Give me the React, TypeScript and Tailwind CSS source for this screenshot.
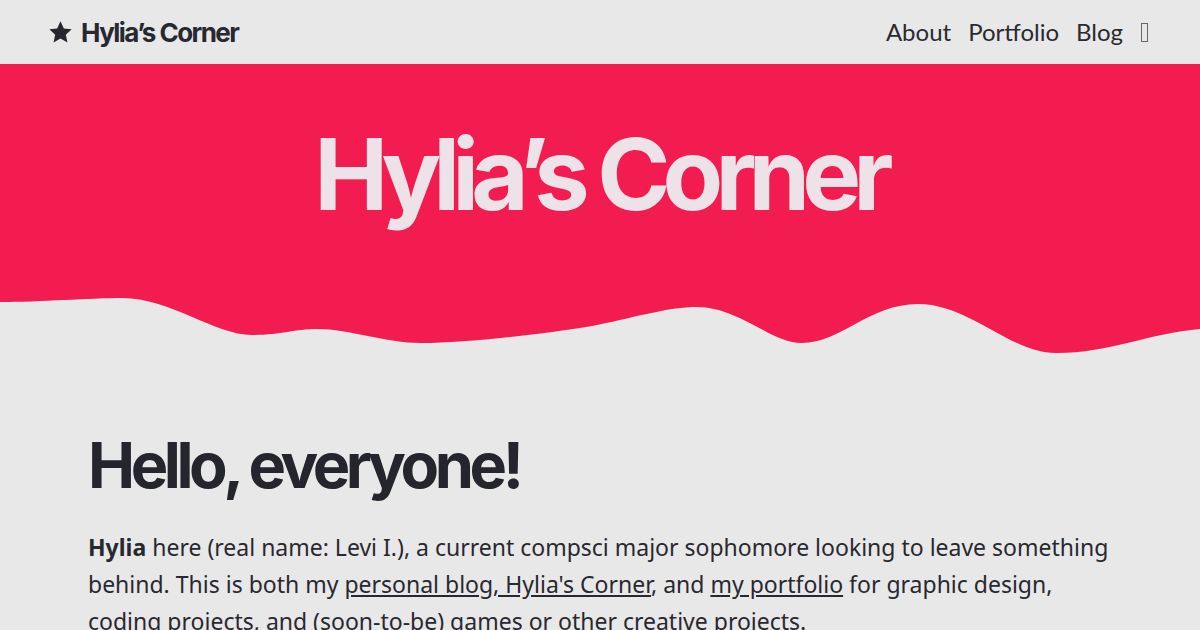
import React from 'react';

const Star: React.FC = () => (
  <svg viewBox="0 0 24 24" className="w-[25px] h-[25px]" fill="#26262e">
    <path d="M12 1.2l3.2 6.9 7.5.85-5.6 5.1 1.6 7.45L12 17.75l-6.7 3.75 1.6-7.45-5.6-5.1 7.5-.85z" />
  </svg>
);

const App: React.FC = () => {
  return (
    <div className="min-h-screen bg-[#e8e8e8] text-[#282830]">
      <nav className="h-16 flex items-center justify-between pl-[48px] pr-[52px]">
        <a className="flex items-center gap-[8px]">
          <Star />
          <span className="text-[26px] font-bold tracking-[-0.06em] font-['Inter',sans-serif]">Hylia’s Corner</span>
        </a>
        <div className="flex items-center gap-[17px] text-[24px] font-['Lato',sans-serif] text-[#2a2a30]">
          <a>About</a>
          <a>Portfolio</a>
          <a>Blog</a>
          <span className="ml-[1px] w-[7px] h-[19px] border-[1.5px] border-[#66666c]" />
        </div>
      </nav>

      <header>
        <div className="h-[232px] bg-[#f21c51] flex items-start justify-center pt-[61px]">
          <h1 className="text-[99px] leading-none font-bold tracking-[-0.08em] text-[#ece2e7] font-['Inter',sans-serif]">
            Hylia’s Corner
          </h1>
        </div>
        <svg viewBox="0 0 1200 60" preserveAspectRatio="none" className="block w-full h-[60px]">
          <path
            fill="#f21c51"
            d="M0 0 V6 C40 6 90 2 122 2 C170 2 215 39 252 39 C280 39 295 33 317 33 C350 33 385 47 421 47 C470 47 560 36 597 29 C640 20 670 11 696 11 C740 11 770 47 802 47 C840 47 870 8 918 8 C970 8 1010 57 1056 57 C1110 57 1150 37 1200 33 V0 Z"
          />
        </svg>
      </header>

      <main className="max-w-5xl mx-auto pt-[78px]">
        <h2 className="text-[63px] leading-none font-bold tracking-[-0.07em] text-[#25252d] font-['Inter',sans-serif]">
          Hello, everyone!
        </h2>
        <p className="mt-8 text-[23px] leading-[37px] font-['Noto_Sans',sans-serif]">
          <strong className="font-bold">Hylia</strong> here (real name: Levi I.), a current compsci major sophomore looking to leave something
          behind. This is both my <a className="underline">personal blog, Hylia's Corner</a>, and{' '}
          <a className="underline">my portfolio</a> for graphic design, coding projects, and (soon-to-be) games or other creative projects.
        </p>
      </main>
    </div>
  );
};

export default App;
